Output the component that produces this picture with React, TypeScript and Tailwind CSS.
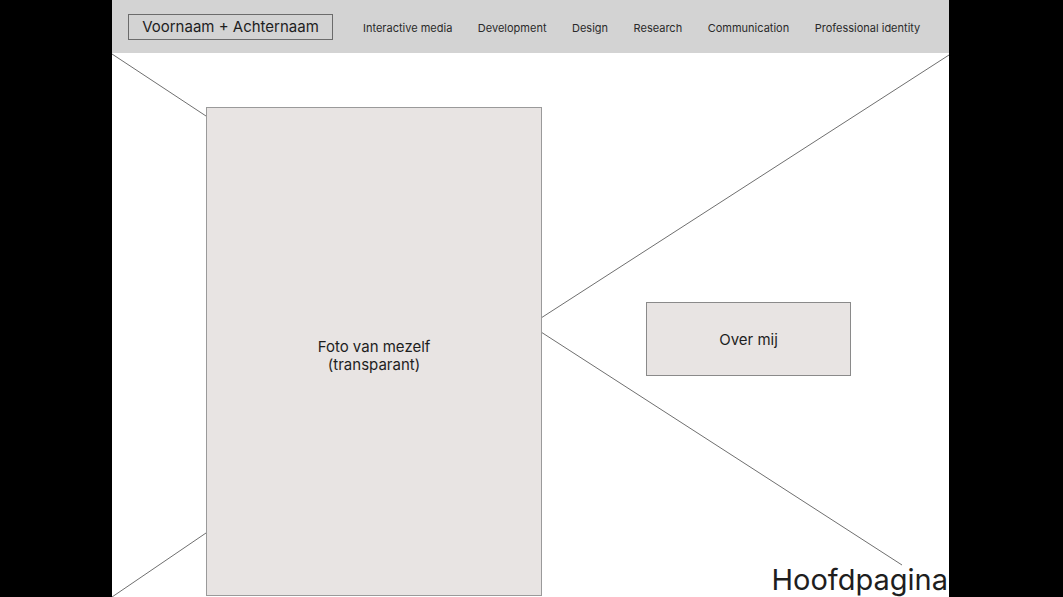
import React from "react";

const navItems = [
  "Interactive media",
  "Development",
  "Design",
  "Research",
  "Communication",
  "Professional identity",
];

export default function App() {
  return (
    <div className="w-full h-[597px] bg-black overflow-hidden" style={{ fontFamily: "Inter, 'Noto Sans', sans-serif" }}>
      <div className="relative ml-[112px] w-[837px] h-[597px] bg-white overflow-hidden text-[#1e1e1e]">
        {/* wireframe cross lines */}
        <svg className="absolute inset-0" width="837" height="597" viewBox="0 0 837 597">
          <g stroke="#6f6f6f" strokeWidth="1" fill="none">
            <line x1="0" y1="54" x2="94" y2="116" />
            <line x1="0" y1="597" x2="94" y2="533" />
            <line x1="429" y1="318" x2="837" y2="55" />
            <line x1="429" y1="332" x2="790" y2="565" />
          </g>
        </svg>

        <header className="relative h-[53px] bg-[#d3d3d3] flex items-center pl-4">
          <div className="w-[205px] h-[26px] border border-[#6b6b6b] flex items-center justify-center pt-[2px] text-[15px]">
            Voornaam + Achternaam
          </div>
          <nav className="ml-[30px] flex items-center gap-[25.5px] pt-[3px] text-[11px] text-[#2a2a2a] whitespace-nowrap">
            {navItems.map((item) => (
              <span key={item}>{item}</span>
            ))}
          </nav>
        </header>

        <div className="relative flex items-start pl-[94px] pt-[54px]">
          <div className="w-[336px] h-[489px] bg-[#e8e4e3] border border-[#9a9a9a] flex items-center justify-center pt-2 text-center text-[15px] leading-[18px]">
            <p>
              Foto van mezelf
              <br />
              (transparant)
            </p>
          </div>
          <div className="ml-[104px] mt-[195px] w-[205px] h-[74px] bg-[#e8e4e3] border border-[#8a8a8a] flex items-center justify-center text-[15px] pt-[3px]">
            Over mij
          </div>
        </div>

        <div className="absolute right-[1px] bottom-[3px] text-[29px] leading-none whitespace-nowrap">
          Hoofdpagina
        </div>
      </div>
    </div>
  );
}
